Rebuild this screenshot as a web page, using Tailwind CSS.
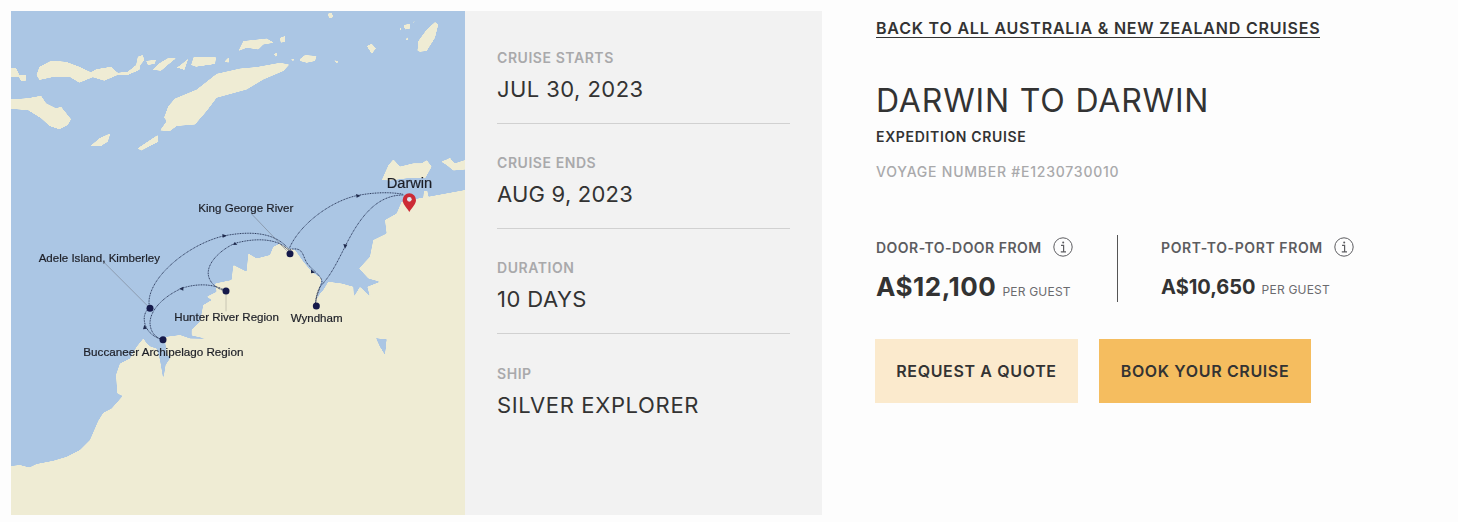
<!DOCTYPE html>
<html lang="en">
<head>
    <meta charset="UTF-8">
    <meta name="viewport" content="width=device-width, initial-scale=1.0">
    <title>Darwin to Darwin</title>
    <script src="https://cdn.jsdelivr.net/npm/@tailwindcss/browser@4"></script>
</head>
<body class="bg-[#fdfdfd] font-['Inter',sans-serif] text-[#333] overflow-hidden">
    <div class="flex pt-[11px] pl-[11px] h-[522px]">
        <!-- Route map -->
        <div class="w-[454px] h-[504px] shrink-0 overflow-hidden bg-[#abc6e4]">
            <svg viewBox="33 33 1362 1512" class="block w-[454px] h-[504px]">
                <defs>
                    <!-- rounds off the polygon corners so the coast looks like the scaled map image -->
                    <filter id="soft-coast" filterUnits="userSpaceOnUse" x="-100" y="-100" width="1700" height="1800">
                        <feGaussianBlur stdDeviation="2" />
                        <feComponentTransfer>
                            <feFuncA type="linear" slope="3.5" intercept="-1.25" />
                        </feComponentTransfer>
                    </filter>
                </defs>
                <g fill="#efecd4" filter="url(#soft-coast)">
                    <!-- Australia -->
                    <polygon points="-20,1398 33,1398 60,1395 88,1402 110,1392 160,1382 200,1370 240,1350 270,1320 295,1262 310,1238 335,1225 368,1188 352,1180 348,1125 360,1090 390,1075 410,1040 430,1015 440,1030 452,1040 470,1045 480,1080 490,1138 497,1095 510,1075 518,1085 500,1060 495,1020 500,1010 540,1005 570,1015 620,1016 575,1006 575,990 600,965 610,915 635,900 620,890 650,875 645,850 695,840 700,795 740,815 745,760 770,775 810,765 820,740 840,730 865,745 885,750 910,785 935,815 965,835 955,880 948,905 960,880 970,870 985,845 1025,850 1060,860 1062,890 1080,860 1110,890 1102,860 1140,845 1105,835 1077,805 1110,770 1120,720 1160,700 1155,660 1190,640 1205,605 1270,592 1272,572 1282,572 1285,590 1395,570 1460,560 1460,1600 -20,1600" />
                    <!-- Land north of Darwin -->
                    <g transform="translate(840 450)">
                        <polygon points="305,90 325,45 340,28 360,50 400,40 425,40 440,30 455,50 435,85 380,85 330,92" />
                        <polygon points="483,35 510,25 525,40 555,30 600,30 600,55 520,62 500,45" />
                    </g>
                    <!-- Islands, west -->
                    <g transform="translate(33 120)">
                        <polygon points="-40,180 50,175 90,167 105,190 135,205 150,200 180,238 170,255 145,268 115,258 90,235 50,210 -40,205" />
                        <polygon points="76,105 85,80 120,62 165,65 205,80 240,97 255,88 300,80 320,98 350,95 375,75 380,50 395,45 400,60 388,75 385,90 350,105 320,105 280,122 245,112 205,128 175,110 130,110 85,120" />
                        <polygon points="-40,85 15,85 25,105 45,105 45,122 30,122 22,110 -40,115" />
                        <polygon points="405,62 435,60 430,72 410,75" />
                        <polygon points="425,90 445,70 470,55 495,55 470,75 450,92" />
                        <polygon points="495,85 515,70 532,55 520,90 505,85" />
                        <polygon points="540,75 548,50 615,52 612,72 555,80" />
                        <polygon points="640,65 652,52 652,68" />
                        <polygon points="238,318 265,295 298,280 290,305 270,318" />
                        <polygon points="380,325 425,295 440,285 442,305 390,332" />
                    </g>
                    <!-- Islands, east -->
                    <g transform="translate(420 33)">
                        <polygon points="60,358 80,330 72,320 85,285 105,262 170,235 230,188 300,172 350,168 420,155 448,160 430,180 370,205 320,235 230,260 200,300 165,340 110,345 90,360" />
                        <polygon points="295,120 310,90 380,82 402,95 370,100 355,115 320,110" />
                        <polygon points="420,80 435,75 435,92 422,95" />
                        <polygon points="402,128 412,125 412,135 405,136" />
                        <polygon points="450,145 464,142 460,150" />
                        <polygon points="478,145 495,132 530,135 525,150 500,155 480,150" />
                        <polygon points="580,146 598,152 590,156" />
                        <polygon points="680,105 695,98 708,112 695,128" />
                        <polygon points="562,8 575,5 580,18 568,22" />
                        <polygon points="832,120 835,90 860,55 885,33 895,40 885,80 860,120 840,122" />
                        <polygon points="790,42 810,38 810,52 795,55" />
                        <polygon points="795,85 805,78 803,88" />
                        <polygon points="778,52 784,50 782,60" />
                        <polygon points="818,32 825,30 822,36" />
                    </g>
                </g>
                <!-- Inland water -->
                <polygon points="1128,1015 1160,1018 1155,1065 1140,1040" fill="#abc6e4" filter="url(#soft-coast)" />

                <g class="blur-[0.4px]">
                    <!-- Label leader lines -->
                    <g fill="none" stroke="#7d8796" stroke-width="2">
                        <path d="M755,642 L860,752" />
                        <path d="M310,785 L445,920" />
                        <path d="M678,880 L678,934" stroke="#b5b3a5" />
                    </g>

                    <!-- Voyage route -->
                    <g fill="none" stroke="#2c3a5c" stroke-width="3" stroke-dasharray="3 2">
                        <path d="M868,745 C900,670 1000,598 1080,585 C1120,578 1170,575 1210,583" />
                        <path d="M1210,585 C1130,585 1080,650 1035,740 C1010,790 990,830 960,860 C950,880 945,900 949,918" />
                        <path d="M870,748 C915,740 905,770 925,795 C950,820 970,835 965,850 C952,880 947,900 945,918" />
                        <path d="M868,750 C830,700 760,690 670,708 C580,730 490,800 460,860 C445,890 445,910 450,925" />
                        <path d="M868,755 C840,715 770,712 705,730 C660,750 620,790 625,825 C630,855 660,870 678,873" />
                        <path d="M678,873 C640,850 590,850 545,865 C490,890 450,930 450,970 C452,1000 470,1015 489,1019" />
                        <path d="M489,1019 C450,1010 430,980 433,950 C436,935 440,930 450,925" />
                    </g>
                    <g fill="#1f2a4d">
                        <polygon points="1082,587 1068,582 1070,593" />
                        <polygon points="1035,746 1030,732 1042,734" />
                        <polygon points="681,707 667,702 668,713" />
                        <polygon points="704,726 712,734 699,735" />
                        <polygon points="538,866 550,860 550,872" />
                        <polygon points="945,818 933,808 933,820" />
                        <polygon points="433,974 429,988 441,986" />
                    </g>

                    <!-- Ports -->
                    <g fill="#15194a">
                        <circle cx="870" cy="761" r="10.5" />
                        <circle cx="450" cy="925" r="10.5" />
                        <circle cx="678" cy="873" r="10.5" />
                        <circle cx="489" cy="1019" r="10.5" />
                        <circle cx="949" cy="918" r="10.5" />
                    </g>

                    <!-- Darwin pin -->
                    <path d="M1228,636 C1218,620 1208,612 1208,600 A20,20 0 0 1 1248,600 C1248,612 1238,620 1228,636 Z" fill="#cc2b35" />
                    <circle cx="1228" cy="598" r="7" fill="#dfe8ee" />

                    <g font-family="'Liberation Sans',sans-serif" fill="#1c1e26" stroke="#1c1e26" stroke-width="0.6">
                        <text x="1160" y="565" font-size="44">Darwin</text>
                        <text x="595" y="635" font-size="34.7">King George River</text>
                        <text x="116" y="785" font-size="34.7">Adele Island, Kimberley</text>
                        <text x="523" y="964" font-size="34.7">Hunter River Region</text>
                        <text x="872" y="967" font-size="34.7">Wyndham</text>
                        <text x="250" y="1067" font-size="35">Buccaneer Archipelago Region</text>
                    </g>
                </g>
            </svg>
        </div>

        <!-- Voyage facts -->
        <div class="w-[357px] h-[504px] shrink-0 bg-[#f2f2f2] px-8 pt-[8px]">
            <div class="h-[105px] border-b border-[#d1d1d1] pt-[29px]">
                <p class="text-[14px] leading-[20px] font-semibold tracking-[0.04em] text-[#a9a9ab]">CRUISE STARTS</p>
                <p class="mt-[5px] text-[22px] leading-[32px] tracking-[0.02em] text-[#333]">JUL 30, 2023</p>
            </div>
            <div class="h-[105px] border-b border-[#d1d1d1] pt-[29px]">
                <p class="text-[14px] leading-[20px] font-semibold tracking-[0.04em] text-[#a9a9ab]">CRUISE ENDS</p>
                <p class="mt-[5px] text-[22px] leading-[32px] tracking-[0.01em] text-[#333]">AUG 9, 2023</p>
            </div>
            <div class="h-[105px] border-b border-[#d1d1d1] pt-[29px]">
                <p class="text-[14px] leading-[20px] font-semibold tracking-[0.04em] text-[#a9a9ab]">DURATION</p>
                <p class="mt-[5px] text-[22px] leading-[32px] tracking-[0.02em] text-[#333]">10 DAYS</p>
            </div>
            <div class="pt-[30px]">
                <p class="text-[14px] leading-[20px] font-semibold tracking-[0.04em] text-[#a9a9ab]">SHIP</p>
                <p class="mt-[5px] text-[22px] leading-[32px] tracking-[0.03em] text-[#333]">SILVER EXPLORER</p>
            </div>
        </div>

        <!-- Cruise summary -->
        <div class="pl-[53px] -mt-[11px]">
            <a href="#" class="block w-fit ml-px mt-[18px] text-[16px] leading-[20px] font-semibold tracking-[0.05em] text-[#333] border-b border-[#333] h-[20px]">BACK TO ALL AUSTRALIA &amp; NEW ZEALAND CRUISES</a>
            <h1 class="ml-px mt-[44px] text-[32px] leading-[38px] tracking-[0.026em] text-[#333]">DARWIN TO DARWIN</h1>
            <p class="ml-px mt-[7px] text-[14px] leading-[20px] font-semibold tracking-[0.047em] text-[#333]">EXPEDITION CRUISE</p>
            <p class="ml-px mt-[15px] text-[14px] leading-[20px] font-medium tracking-[0.055em] text-[#a9a9ab]">VOYAGE NUMBER #E1230730010</p>

            <div class="flex ml-px mt-[53px] h-[67px]">
                <div class="w-[242px] border-r border-[#555]">
                    <div class="flex items-center h-[24px]">
                        <span class="text-[14px] font-semibold tracking-[0.47px] text-[#5c5c60]">DOOR-TO-DOOR FROM</span>
                        <svg viewBox="0 0 20 20" class="w-[20px] h-[20px] ml-[11px] text-[#5c5c60]" fill="none" stroke="currentColor">
                            <circle cx="10" cy="10" r="9.2" stroke-width="1" />
                            <path d="M8 8.4 H10.6 V14.6 M7.8 14.8 H13" stroke-width="1.2" />
                            <circle cx="10.2" cy="5.6" r="1" fill="currentColor" stroke="none" />
                        </svg>
                    </div>
                    <div class="flex items-baseline mt-[12px]">
                        <span class="text-[26px] leading-[32px] font-bold tracking-[0.02em] text-[#333]">A$12,100</span>
                        <span class="ml-[6px] text-[12px] tracking-[0.2px] text-[#6b6b6e]">PER GUEST</span>
                    </div>
                </div>
                <div class="pl-[43px]">
                    <div class="flex items-center h-[24px]">
                        <span class="text-[14px] font-semibold tracking-[0.6px] text-[#5c5c60]">PORT-TO-PORT FROM</span>
                        <svg viewBox="0 0 20 20" class="w-[20px] h-[20px] ml-[11px] text-[#5c5c60]" fill="none" stroke="currentColor">
                            <circle cx="10" cy="10" r="9.2" stroke-width="1" />
                            <path d="M8 8.4 H10.6 V14.6 M7.8 14.8 H13" stroke-width="1.2" />
                            <circle cx="10.2" cy="5.6" r="1" fill="currentColor" stroke="none" />
                        </svg>
                    </div>
                    <div class="flex items-baseline mt-[12px]">
                        <span class="text-[20px] leading-[32px] font-bold text-[#333]">A$10,650</span>
                        <span class="ml-[6px] text-[12px] tracking-[0.2px] text-[#6b6b6e]">PER GUEST</span>
                    </div>
                </div>
            </div>

            <div class="flex gap-[21px] mt-[37px]">
                <button class="w-[203px] h-[64px] bg-[#fbeacd] text-[16px] font-semibold tracking-[0.04em] text-[#333]">REQUEST A QUOTE</button>
                <button class="w-[212px] h-[64px] bg-[#f5bd5f] text-[16px] font-semibold tracking-[0.04em] text-[#333]">BOOK YOUR CRUISE</button>
            </div>
        </div>
    </div>
</body>
</html>
